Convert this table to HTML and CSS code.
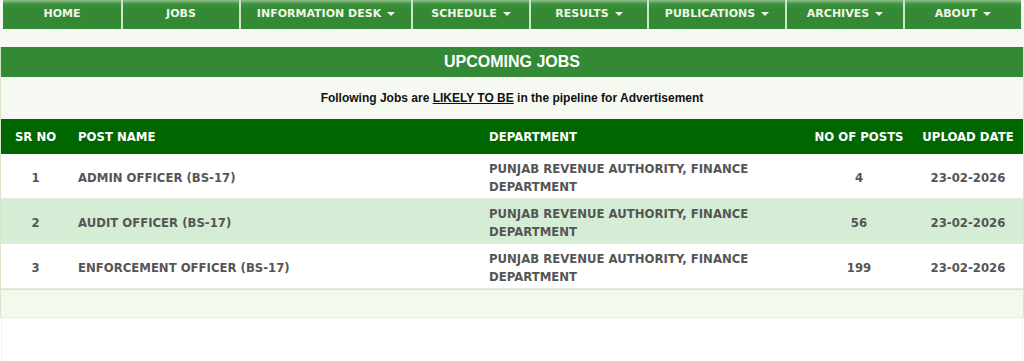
FILE: index.html
```html
<!DOCTYPE html>
<html>
<head>
<meta charset="utf-8">
<link rel="stylesheet" href="styles.css">
</head>
<body>
<div class="page">
  <nav class="nav">
    <a class="nav-item">HOME</a>
    <a class="nav-item">JOBS</a>
    <a class="nav-item">INFORMATION DESK<span class="caret"></span></a>
    <a class="nav-item">SCHEDULE<span class="caret"></span></a>
    <a class="nav-item">RESULTS<span class="caret"></span></a>
    <a class="nav-item">PUBLICATIONS<span class="caret"></span></a>
    <a class="nav-item">ARCHIVES<span class="caret"></span></a>
    <a class="nav-item">ABOUT<span class="caret"></span></a>
  </nav>
  <section class="panel">
    <h2 class="panel-title">UPCOMING JOBS</h2>
    <p class="panel-note">Following Jobs are <u>LIKELY TO BE</u> in the pipeline for Advertisement</p>
    <table class="jobs">
      <colgroup>
        <col class="c-sr"><col class="c-post"><col class="c-dept"><col class="c-num"><col class="c-date">
      </colgroup>
      <thead>
        <tr>
          <th class="center">SR NO</th>
          <th>POST NAME</th>
          <th>DEPARTMENT</th>
          <th class="center">NO OF POSTS</th>
          <th class="center">UPLOAD DATE</th>
        </tr>
      </thead>
      <tbody>
        <tr>
          <td class="center">1</td>
          <td>ADMIN OFFICER (BS-17)</td>
          <td>PUNJAB REVENUE AUTHORITY, FINANCE DEPARTMENT</td>
          <td class="center">4</td>
          <td class="center">23-02-2026</td>
        </tr>
        <tr class="alt">
          <td class="center">2</td>
          <td>AUDIT OFFICER (BS-17)</td>
          <td>PUNJAB REVENUE AUTHORITY, FINANCE DEPARTMENT</td>
          <td class="center">56</td>
          <td class="center">23-02-2026</td>
        </tr>
        <tr>
          <td class="center">3</td>
          <td>ENFORCEMENT OFFICER (BS-17)</td>
          <td>PUNJAB REVENUE AUTHORITY, FINANCE DEPARTMENT</td>
          <td class="center">199</td>
          <td class="center">23-02-2026</td>
        </tr>
      </tbody>
    </table>
    <div class="panel-foot"></div>
  </section>
</div>
<div class="below"></div>
</body>
</html>
```
FILE: styles.css
```css
html, body {
  margin: 0;
  padding: 0;
  background: #ffffff;
}
.page {
  background: #f6f9f1;
}
.nav {
  display: flex;
  margin: 0 3px;
  height: 29px;
  background: linear-gradient(#8fbf8a 0, #3f923d 4px, #348a34 9px, #348a34 100%);
}
.nav-item {
  flex: 1 1 auto;
  min-width: 118px;
  box-sizing: border-box;
  padding: 0 11px;
  text-align: center;
  line-height: 27px;
  font-family: "DejaVu Sans", Verdana, sans-serif;
  font-weight: bold;
  font-size: 11px;
  color: #eef7e8;
  white-space: nowrap;
  border-left: 2px solid #cfe4c8;
}
.nav-item:first-child {
  border-left: none;
}
.caret {
  display: inline-block;
  margin-left: 6px;
  vertical-align: middle;
  width: 0;
  height: 0;
  border-left: 4px solid transparent;
  border-right: 4px solid transparent;
  border-top: 4px solid #eef7e8;
}
.panel {
  margin-top: 18px;
  border-left: 1px solid #d5e7c9;
  border-right: 1px solid #d5e7c9;
}
.panel-title {
  margin: 0;
  height: 30px;
  line-height: 30px;
  background: #348a34;
  color: #ffffff;
  text-align: center;
  font-family: "Liberation Sans", Arial, sans-serif;
  font-weight: bold;
  font-size: 16px;
}
.panel-note {
  margin: 0;
  height: 42px;
  line-height: 42px;
  text-align: center;
  font-family: "Liberation Sans", Arial, sans-serif;
  font-weight: bold;
  font-size: 12px;
  color: #111;
}
.jobs {
  width: 100%;
  border-collapse: collapse;
  table-layout: fixed;
  font-family: "DejaVu Sans", Verdana, sans-serif;
  font-weight: bold;
  font-size: 11.7px;
}
.c-sr { width: 69px; }
.c-post { width: 411px; }
.c-dept { width: 324px; }
.c-num { width: 108px; }
.c-date { width: 110px; }
.jobs th {
  height: 35px;
  padding: 0 8px;
  background: #006600;
  color: #ffffff;
  text-align: left;
  white-space: nowrap;
}
.jobs th.center { padding: 0 2px; }
.jobs td {
  padding: 6px 8px 2px;
  height: 36px;
  line-height: 18px;
  color: #555555;
  background: #ffffff;
  border-bottom: 1px solid #e4eedc;
}
.jobs tr.alt td {
  background: #d5edd5;
}
.jobs .center {
  text-align: center;
}
.panel-foot {
  height: 27px;
  background: #f4f9ee;
  border-top: 1px solid #d6e6cb;
  border-bottom: 1px solid #e8efd8;
}
.below {
  height: 43px;
  margin: 0 1px;
  border-left: 1px solid #eef3ea;
  border-right: 1px solid #eef3ea;
}
```
